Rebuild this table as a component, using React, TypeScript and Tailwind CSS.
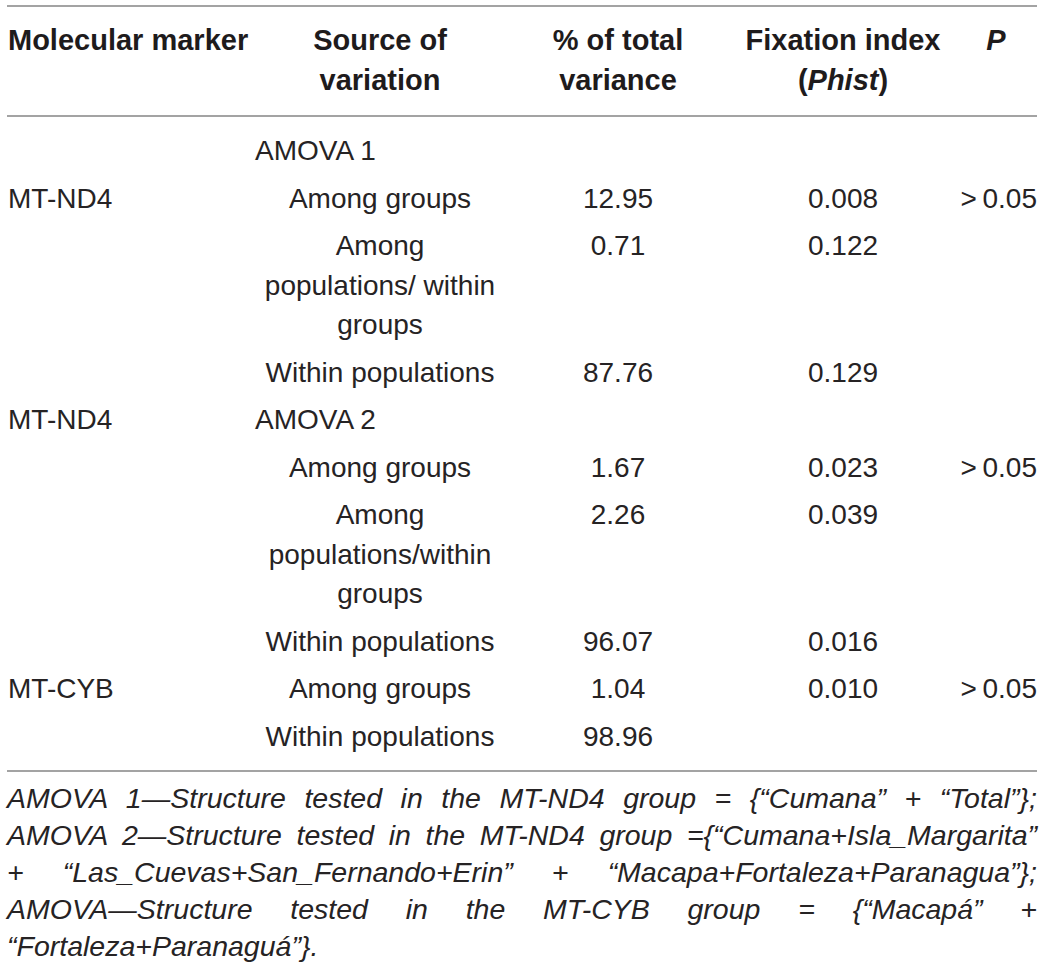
type Row = {
  marker?: string
  source: string[]
  left?: boolean
  pct?: string
  fix?: string
  p?: string
}

const rows: Row[] = [
  { source: ["AMOVA 1"], left: true },
  { marker: "MT-ND4", source: ["Among groups"], pct: "12.95", fix: "0.008", p: ">\u20090.05" },
  { source: ["Among", "populations/ within", "groups"], pct: "0.71", fix: "0.122" },
  { source: ["Within populations"], pct: "87.76", fix: "0.129" },
  { marker: "MT-ND4", source: ["AMOVA 2"], left: true },
  { source: ["Among groups"], pct: "1.67", fix: "0.023", p: ">\u20090.05" },
  { source: ["Among", "populations/within", "groups"], pct: "2.26", fix: "0.039" },
  { source: ["Within populations"], pct: "96.07", fix: "0.016" },
  { marker: "MT-CYB", source: ["Among groups"], pct: "1.04", fix: "0.010", p: ">\u20090.05" },
  { source: ["Within populations"], pct: "98.96" },
]

const cols = "grid grid-cols-[248px_250px_226px_224px_82px]"

function Rule() {
  return <div className="h-[2px] w-full bg-[#a3a3a3]" />
}

export default function App() {
  return (
    <div
      className="min-h-screen bg-white pt-[5px] text-[#262324]"
      style={{ fontFamily: '"Liberation Sans", Arial, Helvetica, sans-serif' }}
    >
      <div className="ml-[7px] w-[1030px]">
        <Rule />

        {/* Header */}
        <div className={`${cols} pt-[14px] pb-[15px] text-[29px] leading-[39.5px] font-bold text-[#1e1b1c]`}>
          <div className="pl-[1px] whitespace-nowrap">Molecular marker</div>
          <div className="text-center">
            Source of
            <br />
            variation
          </div>
          <div className="text-center">
            % of total
            <br />
            variance
          </div>
          <div className="text-center whitespace-nowrap">
            Fixation index
            <br />(<i>Phist</i>)
          </div>
          <div className="text-center italic">P</div>
        </div>

        <Rule />

        {/* Body */}
        <div className="pt-[10px] pb-[10px] text-[28px] leading-[39.5px]">
          {rows.map((r, i) => (
            <div key={i} className={`${cols} py-[4px]`}>
              <div className="pl-[1px]">{r.marker}</div>
              <div className={r.left ? "text-left" : "text-center"}>
                {r.source.map((s, j) => (
                  <div key={j}>{s}</div>
                ))}
              </div>
              <div className="text-center">{r.pct}</div>
              <div className="text-center">{r.fix}</div>
              <div className="text-right">{r.p}</div>
            </div>
          ))}
        </div>

        <Rule />

        {/* Footnote */}
        <div className="pt-[8px] text-[28.5px] leading-[37px] italic">
          <div className="text-justify [text-align-last:justify] whitespace-nowrap">
            AMOVA 1—Structure tested in the MT-ND4 group = {"{"}“Cumana” + “Total”{"}"};
          </div>
          <div className="text-justify [text-align-last:justify] whitespace-nowrap">
            AMOVA 2—Structure tested in the MT-ND4 group ={"{"}“Cumana+Isla_Margarita”
          </div>
          <div className="text-justify [text-align-last:justify] whitespace-nowrap">
            + “Las_Cuevas+San_Fernando+Erin” + “Macapa+Fortaleza+Paranagua”{"}"};
          </div>
          <div className="text-justify [text-align-last:justify] whitespace-nowrap">
            AMOVA—Structure tested in the MT-CYB group = {"{"}“Macapá” +
          </div>
          <div>“Fortaleza+Paranaguá”{"}"}.</div>
        </div>
      </div>
    </div>
  )
}
